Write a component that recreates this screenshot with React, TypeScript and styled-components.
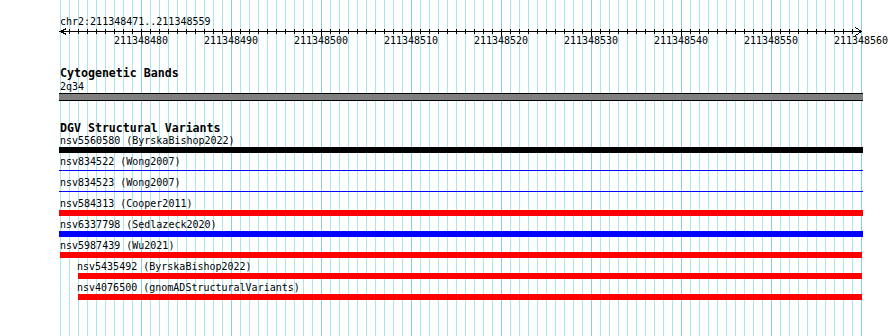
import React from 'react'
import styled, { createGlobalStyle } from 'styled-components'

// 9px per base, view = chr2:211348471..211348559
const BP_PX = 9
const VIEW_START = 211348471
const VIEW_BASES = 89

const GlobalStyle = createGlobalStyle`
  html, body {
    margin: 0;
    padding: 0;
    background: #fff;
  }
  body {
    font-family: 'DejaVu Sans Mono', 'Liberation Mono', monospace;
  }
`

const Page = styled.div`
  display: flex;
  width: 890px;
  height: 336px;
  overflow: hidden;
  background: #fff;
`

const Gutter = styled.div`
  flex: none;
  width: 60px;
`

const View = styled.div`
  flex: none;
  width: 802px;
  height: 336px;
  color: #000;
  font-size: 10px;
  background-image: linear-gradient(to right, #87ceeb 0 1px, transparent 1px),
    linear-gradient(to right, #abe6ee 0 1px, transparent 1px);
  background-size: 90px 100%, 9px 100%;
  background-position: -9px 0, 0 0;
  background-repeat: repeat-x;
`

const Ruler = styled.div`
  padding-top: 16px;
`

const Locus = styled.div`
  height: 11px;
  line-height: 11px;
  white-space: nowrap;
`

const Axis = styled.svg`
  display: block;
  overflow: visible;
`

const Track = styled.div<{ $gap: number }>`
  margin-top: ${({ $gap }) => $gap}px;
`

const TrackLabel = styled.div`
  height: 12px;
  line-height: 12px;
  font-size: 11.6px;
  font-weight: bold;
  white-space: nowrap;
`

const SubLabel = styled.div`
  margin-top: 2px;
  height: 11px;
  line-height: 11px;
  white-space: nowrap;
`

const BandBar = styled.div`
  margin: 1px -1px 0;
  height: 6px;
  background: #808080;
  border-top: 1px solid #000;
  border-bottom: 1px solid #000;
`

const FeatureList = styled.div`
  margin-top: 1px;
`

const Row = styled.div`
  height: 21px;
`

const FeatureLabel = styled.div<{ $indent: number }>`
  height: 11px;
  line-height: 11px;
  padding-left: ${({ $indent }) => $indent}px;
  white-space: nowrap;
`

const Bar = styled.div<{ $color: string; $thin?: boolean }>`
  margin-top: ${({ $thin }) => ($thin ? 3 : 1)}px;
  height: ${({ $thin }) => ($thin ? 1 : 6)}px;
  background: ${({ $color }) => $color};
`

type Feature = {
  name: string
  study: string
  color: string
  thin?: boolean
  left: number
  width: number
  indent: number
}

const features: Feature[] = [
  { name: 'nsv5560580', study: 'ByrskaBishop2022', color: '#000', left: -1, width: 804, indent: 0 },
  { name: 'nsv834522', study: 'Wong2007', color: '#00f', thin: true, left: -1, width: 804, indent: 0 },
  { name: 'nsv834523', study: 'Wong2007', color: '#00f', thin: true, left: -1, width: 804, indent: 0 },
  { name: 'nsv584313', study: 'Cooper2011', color: '#f00', left: -1, width: 804, indent: 0 },
  { name: 'nsv6337798', study: 'Sedlazeck2020', color: '#00f', left: -1, width: 804, indent: 0 },
  { name: 'nsv5987439', study: 'Wu2021', color: '#f00', left: 0, width: 802, indent: 0 },
  { name: 'nsv5435492', study: 'ByrskaBishop2022', color: '#f00', left: 18, width: 784, indent: 17 },
  { name: 'nsv4076500', study: 'gnomADStructuralVariants', color: '#f00', left: 18, width: 784, indent: 17 },
]

function RulerAxis() {
  const ticks = []
  for (let k = 0; k <= VIEW_BASES; k++) {
    const pos = VIEW_START + k
    const x = k * BP_PX + 0.5
    const major = pos % 10 === 0
    if (k > 0 && k < VIEW_BASES) {
      ticks.push(<line key={'t' + k} x1={x} x2={x} y1={2} y2={major ? 9 : 7} />)
    }
    if (major) {
      ticks.push(
        <text key={'l' + k} x={k * BP_PX} y={17} textAnchor="middle" stroke="none" fill="#000">
          {pos}
        </text>
      )
    }
  }

  const end = VIEW_BASES * BP_PX + 0.5
  return (
    <Axis width={802} height={22} shapeRendering="crispEdges" fontSize={10} fontFamily="'DejaVu Sans Mono', monospace">
      <g stroke="#000" strokeWidth={1} fill="none">
        <line x1={0.5} x2={end} y1={4.5} y2={4.5} />
        <path d="M6.5 1.5 L0.5 4.5 L6.5 7.5" />
        <path d={`M${end - 6} 0.5 L${end} 4.5 L${end - 6} 8.5`} />
        {ticks}
      </g>
    </Axis>
  )
}

export default function App() {
  return (
    <>
      <GlobalStyle />
      <Page>
        <Gutter />
        <View>
          <Ruler>
            <Locus>chr2:211348471..211348559</Locus>
            <RulerAxis />
          </Ruler>

          <Track $gap={18}>
            <TrackLabel>Cytogenetic Bands</TrackLabel>
            <SubLabel>2q34</SubLabel>
            <BandBar />
          </Track>

          <Track $gap={21}>
            <TrackLabel>DGV Structural Variants</TrackLabel>
            <FeatureList>
              {features.map((f) => (
                <Row key={f.name}>
                  <FeatureLabel $indent={f.indent}>
                    {f.name} ({f.study})
                  </FeatureLabel>
                  <Bar $color={f.color} $thin={f.thin} style={{ marginLeft: f.left, width: f.width }} />
                </Row>
              ))}
            </FeatureList>
          </Track>
        </View>
      </Page>
    </>
  )
}
